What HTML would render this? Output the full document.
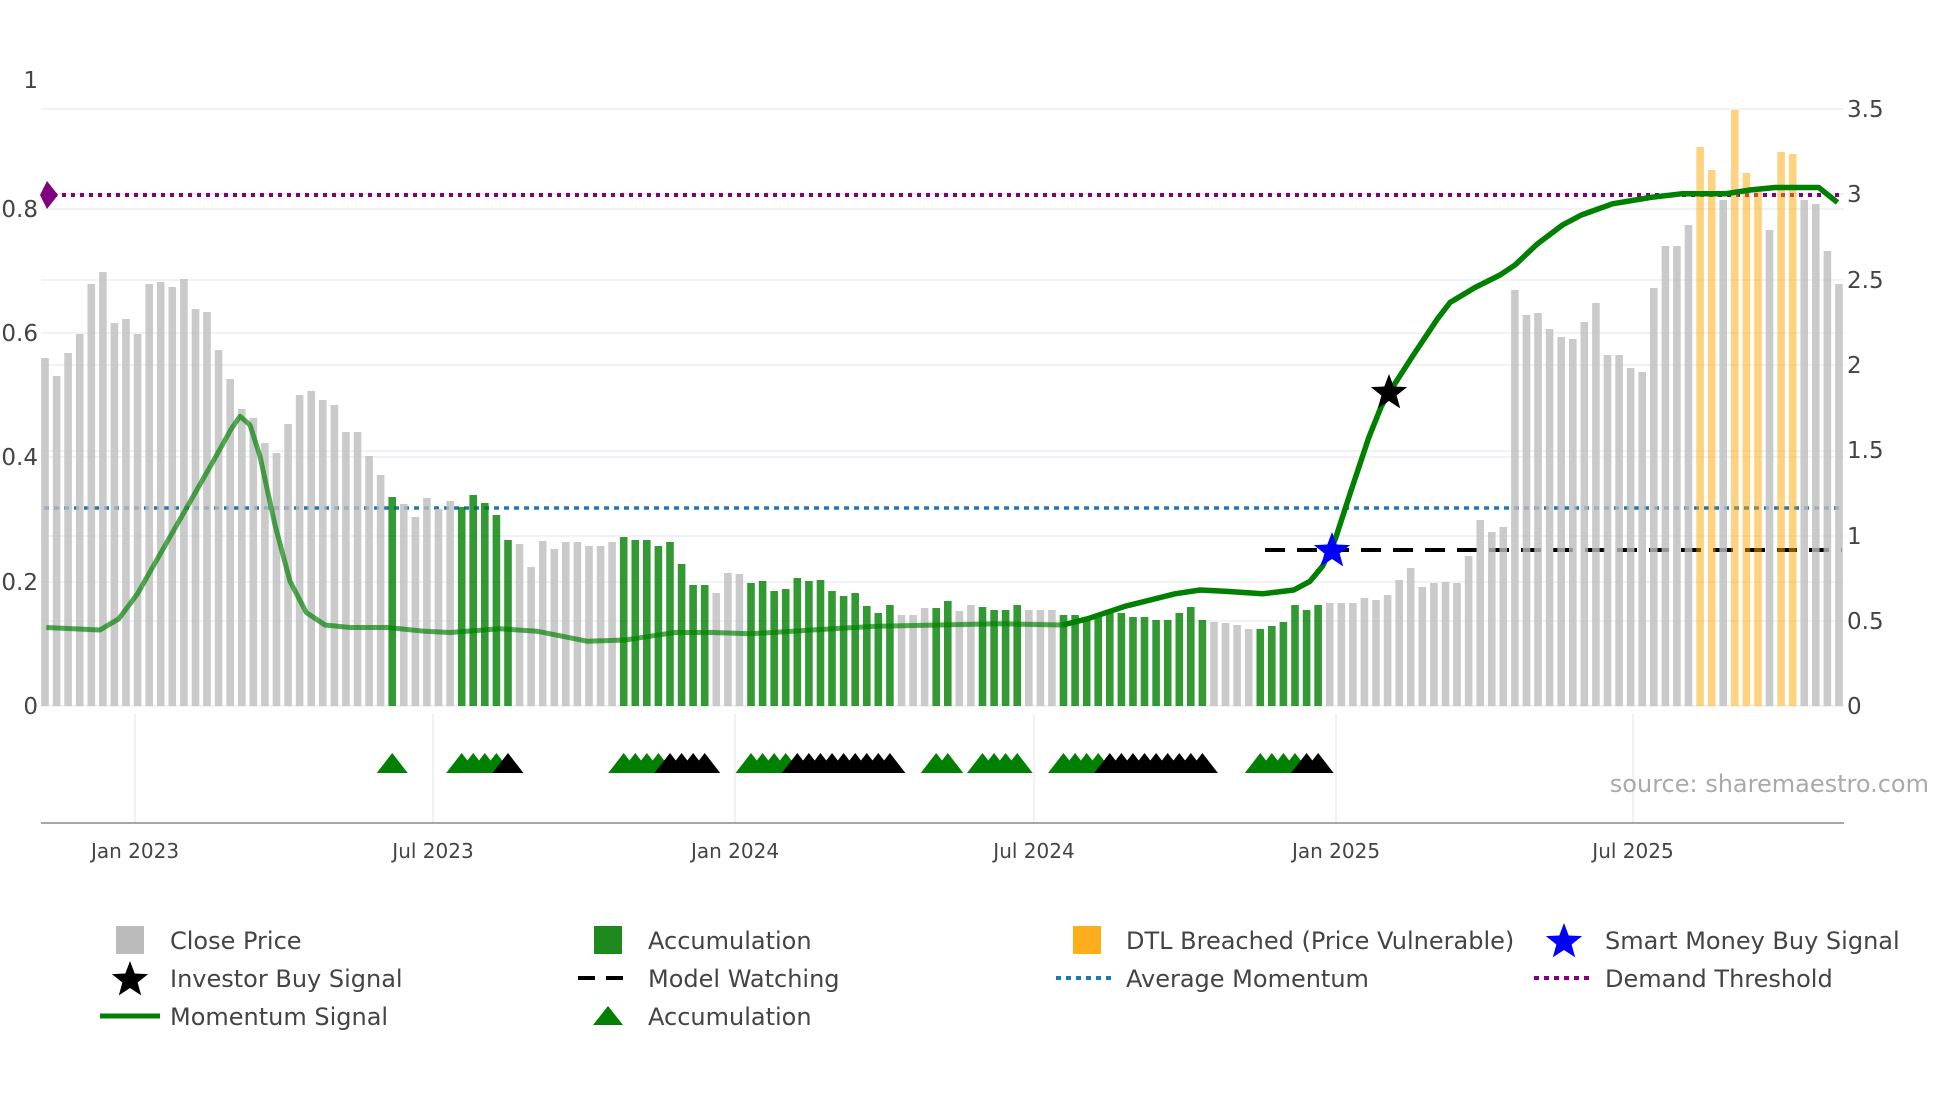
<!DOCTYPE html>
<html><head><meta charset="utf-8">
<style>
html,body{margin:0;padding:0;background:#fff;}
svg{display:block;}
text{font-family:"DejaVu Sans","Liberation Sans",sans-serif;fill:#444;}
</style></head>
<body>
<svg id="s" width="1960" height="1102" viewBox="0 0 1960 1102" xmlns="http://www.w3.org/2000/svg">
<rect width="1960" height="1102" fill="#fff"/>
<g id="grid" stroke="#ebeef3" stroke-width="1.5">
<line x1="41" x2="1844" y1="109" y2="109"/>
<line x1="41" x2="1844" y1="194" y2="194"/>
<line x1="41" x2="1844" y1="209" y2="209"/>
<line x1="41" x2="1844" y1="280" y2="280"/>
<line x1="41" x2="1844" y1="333" y2="333"/>
<line x1="41" x2="1844" y1="365" y2="365"/>
<line x1="41" x2="1844" y1="451" y2="451"/>
<line x1="41" x2="1844" y1="457" y2="457"/>
<line x1="41" x2="1844" y1="536" y2="536"/>
<line x1="41" x2="1844" y1="582" y2="582"/>
<line x1="41" x2="1844" y1="621" y2="621"/>
<line x1="41" x2="1844" y1="706" y2="706"/>
<line x1="135" x2="135" y1="714" y2="823"/>
<line x1="433" x2="433" y1="714" y2="823"/>
<line x1="735" x2="735" y1="714" y2="823"/>
<line x1="1034" x2="1034" y1="714" y2="823"/>
<line x1="1336" x2="1336" y1="714" y2="823"/>
<line x1="1633" x2="1633" y1="714" y2="823"/>
</g>
<line x1="41" x2="1844" y1="823" y2="823" stroke="#8a8a8a" stroke-width="1.5"/>
<line x1="44" x2="1842" y1="195" y2="195" stroke="#800080" stroke-width="4" stroke-dasharray="4 5"/>
<line x1="44" x2="1842" y1="508" y2="508" stroke="#1f77b4" stroke-width="3.5" stroke-dasharray="5 5"/>
<line x1="1265" x2="1842" y1="550" y2="550" stroke="#000" stroke-width="4" stroke-dasharray="20 12"/>
<g id="bars"></g>
<path id="mom1" fill="none" stroke="#008000" stroke-opacity="0.68" stroke-width="5" stroke-linejoin="round"/>
<path id="mom2" fill="none" stroke="#008000" stroke-width="5.5" stroke-linejoin="round"/>
<polygon points="40,195 47,181 58,195 47,209" fill="#800080"/>
<g id="tri"></g>
<path id="bstar" fill="#0000ff"/>
<path id="kstar" fill="#000"/>
<g font-size="23" text-anchor="end">
<text x="38" y="714">0</text>
<text x="38" y="590">0.2</text>
<text x="38" y="465">0.4</text>
<text x="38" y="341">0.6</text>
<text x="38" y="217">0.8</text>
<text x="38" y="88">1</text>
</g>
<g font-size="23">
<text x="1847" y="117">3.5</text>
<text x="1847" y="202">3</text>
<text x="1847" y="288">2.5</text>
<text x="1847" y="373">2</text>
<text x="1847" y="458">1.5</text>
<text x="1847" y="544">1</text>
<text x="1847" y="629">0.5</text>
<text x="1847" y="714">0</text>
</g>
<g font-size="20" text-anchor="middle">
<text x="135" y="858">Jan 2023</text>
<text x="433" y="858">Jul 2023</text>
<text x="735" y="858">Jan 2024</text>
<text x="1034" y="858">Jul 2024</text>
<text x="1336" y="858">Jan 2025</text>
<text x="1633" y="858">Jul 2025</text>
</g>
<text x="1929" y="792" font-size="24" text-anchor="end" style="fill:#aaa">source: sharemaestro.com</text>
<g font-size="24">
<rect x="116" y="926" width="28" height="28" fill="#bbbbbb"/>
<text x="170" y="949">Close Price</text>
<path id="lstar1" fill="#000"/>
<text x="170" y="987">Investor Buy Signal</text>
<line x1="100" x2="160" y1="1016" y2="1016" stroke="#008000" stroke-width="5"/>
<text x="170" y="1025">Momentum Signal</text>
<rect x="594" y="926" width="28" height="28" fill="#1e8a1e"/>
<text x="648" y="949">Accumulation</text>
<line x1="578" x2="634" y1="978" y2="978" stroke="#000" stroke-width="4" stroke-dasharray="17 11"/>
<text x="648" y="987">Model Watching</text>
<polygon points="593,1025 608,1006 623,1025" fill="#008000"/>
<text x="648" y="1025">Accumulation</text>
<rect x="1073" y="926" width="28" height="28" fill="#fdae1c"/>
<text x="1126" y="949">DTL Breached (Price Vulnerable)</text>
<line x1="1056" x2="1112" y1="978" y2="978" stroke="#1f77b4" stroke-width="4" stroke-dasharray="5 5"/>
<text x="1126" y="987">Average Momentum</text>
<path id="lstar2" fill="#0000ff"/>
<text x="1605" y="949">Smart Money Buy Signal</text>
<line x1="1534" x2="1590" y1="978" y2="978" stroke="#800080" stroke-width="4" stroke-dasharray="5 5"/>
<text x="1605" y="987">Demand Threshold</text>
</g>
</svg>
<script>
(function(){
var NS="http://www.w3.org/2000/svg";
var h=[348,330,353,372,422,434,383,387,372,422,424,419,427,397,394,356,327,297,288,263,253,282,311,315,306,301,274,274,250,231,
209,202,189,208,197,205,199,211,203,191,166,162,139,165,157,164,164,160,160,164,
169,166,166,160,164,142,121,121,113,133,132,123,125,115,117,128,125,126,115,110,113,100,
93,101,91,91,98,98,105,95,101,99,96,96,101,96,96,96,91,91,88,91,95,93,89,89,86,86,93,99,86,
84,83,81,77,77,80,84,101,96,101,103,103,103,108,106,111,126,138,119,123,124,123,150,186,174,179,
416,391,393,377,369,367,384,403,351,351,338,334,418,460,460,481,559,536,506,596,533,518,476,554,552,506,502,455,422];
var G={};
[[30,30],[36,40],[50,57],[61,73],[77,78],[81,84],[88,100],[105,110]].forEach(function(r){for(var i=r[0];i<=r[1];i++)G[i]=1;});
var O={143:1,144:1,146:1,147:1,148:1,150:1,151:1};
var bars=document.getElementById('bars');
for(var i=0;i<h.length;i++){
 var x=45+i*11.574;
 var r=document.createElementNS(NS,'rect');
 r.setAttribute('x',(x-3.8).toFixed(1));r.setAttribute('width','7.6');
 r.setAttribute('y',(706-h[i]).toFixed(1));r.setAttribute('height',h[i]);
 var c='#bdbdbd',o='0.8';
 if(G[i]){c='#008000';o='0.8';}
 if(O[i]){c='#ffa500';o='0.5';}
 r.setAttribute('fill',c);r.setAttribute('fill-opacity',o);
 bars.appendChild(r);
}
var tri=document.getElementById('tri');
var tg=[[30,30,'g'],[36,39,'g'],[40,40,'k'],[50,53,'g'],[54,57,'k'],[61,64,'g'],[65,73,'k'],[77,78,'g'],[81,84,'g'],[88,91,'g'],[92,100,'k'],[105,108,'g'],[109,110,'k']];
tg.forEach(function(t){for(var i=t[0];i<=t[1];i++){var cx=45+i*11.574;var p=document.createElementNS(NS,'polygon');
 p.setAttribute('points',(cx-15.5)+',773 '+cx+',753 '+(cx+15.5)+',773');p.setAttribute('fill',t[2]=='g'?'#008000':'#000');tri.appendChild(p);}});
var pts=[[37,502],[80,504],[95,495],[110,475],[130,440],[150,405],[170,370],[185,343],[192,333],[200,340],[208,365],[220,420],[232,465],[245,490],[260,500],[280,502],[310,502],[340,505],[360,506],[400,503],[430,505],[470,513],[500,512],[540,506],[570,506],[600,507],[650,504],[700,501],[750,500],[800,499],[850,500],
[870,495],[900,485],[940,475],[960,472],[980,473],[1010,475],[1035,472],[1048,465],[1058,453],[1068,432],[1080,395],[1095,350],[1105,325],[1112,313],[1130,285],[1150,255],[1160,242],[1180,230],[1200,220],[1212,212],[1230,195],[1250,180],[1265,172],[1290,163],[1320,158],[1345,155],[1380,155],[1400,152],[1420,150],[1455,150],[1470,162]];
function P(a){return a.map(function(p,k){return (k?'L':'M')+(p[0]*1.25).toFixed(1)+' '+(p[1]*1.25).toFixed(1);}).join(' ');}
document.getElementById('mom1').setAttribute('d',P(pts.slice(0,31)));
document.getElementById('mom2').setAttribute('d',P(pts.slice(30)));
function star(cx,cy,R){var r=R*0.42,s='';for(var k=0;k<10;k++){var a=-Math.PI/2+k*Math.PI/5,rr=k%2?r:R;s+=(k?'L':'M')+(cx+rr*Math.cos(a)).toFixed(1)+' '+(cy+rr*Math.sin(a)).toFixed(1);}return s+'Z';}
document.getElementById('bstar').setAttribute('d',star(1332,551,19));
document.getElementById('kstar').setAttribute('d',star(1389,393,19));
document.getElementById('lstar1').setAttribute('d',star(130,980,19));
document.getElementById('lstar2').setAttribute('d',star(1564,942,19));
})();
</script>
</body></html>
